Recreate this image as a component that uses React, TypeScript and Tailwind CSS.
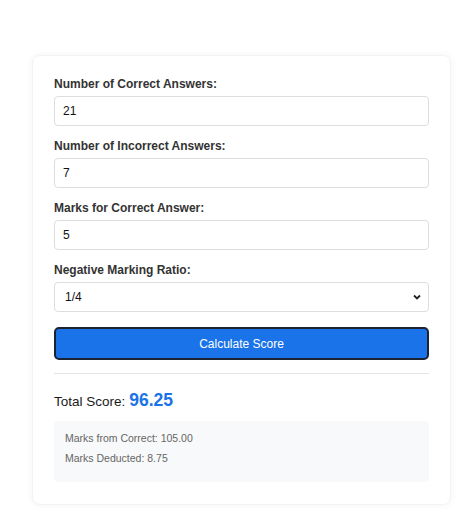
import React from "react";

const Field = ({ label, value }: { label: string; value: string }) => (
  <div className="mb-[13px]">
    <label className="block text-[12px] leading-[15px] font-bold text-[#333] mb-[4px]">{label}</label>
    <div className="h-[30px] border border-[#ddd] rounded-[4px] flex items-center px-[8px] text-[12px] text-[#111] bg-white">
      {value}
    </div>
  </div>
);

export default function App() {
  return (
    <div className="w-[472px] h-[529px] bg-white" style={{ fontFamily: '"Liberation Sans", Arial, sans-serif' }}>
      <div className="pt-[55px] pl-[32px]">
        <div className="w-[419px] rounded-[8px] bg-white border border-[#f3f3f3] shadow-[0_0_8px_rgba(0,0,0,0.05)] pt-[21px] px-[21px] pb-[22px]">
          <Field label="Number of Correct Answers:" value="21" />
          <Field label="Number of Incorrect Answers:" value="7" />
          <Field label="Marks for Correct Answer:" value="5" />
          <div className="mb-[15px]">
            <label className="block text-[12px] leading-[15px] font-bold text-[#333] mb-[4px]">Negative Marking Ratio:</label>
            <div className="h-[30px] border border-[#ddd] rounded-[4px] flex items-center justify-between pl-[10px] pr-[6px] text-[12px] text-[#111] bg-white">
              <span>1/4</span>
              <svg width="10" height="10" viewBox="0 0 10 10">
                <path d="M2 3.5 L5 6.5 L8 3.5" fill="none" stroke="#222" strokeWidth="1.8" />
              </svg>
            </div>
          </div>
          <div className="h-[33px] rounded-[5px] border-2 border-[#1c2330] bg-[#1a73e8] flex items-center justify-center text-white text-[12px]">
            Calculate Score
          </div>
          <div className="h-px bg-[#e4e4e4] mt-[13px]" />
          <div className="mt-[17px] flex items-baseline text-[13.5px] leading-[18px] text-[#1a1a1a]">
            <span>Total Score:</span>
            <span className="ml-[4px] text-[17.5px] font-bold text-[#1a73e8]">96.25</span>
          </div>
          <div className="mt-[10px] rounded-[4px] bg-[#f8f9fa] pt-[7px] pb-[14px] px-[11px] text-[10.5px] leading-[20px] text-[#666]">
            <div>Marks from Correct: 105.00</div>
            <div>Marks Deducted: 8.75</div>
          </div>
        </div>
      </div>
    </div>
  );
}
